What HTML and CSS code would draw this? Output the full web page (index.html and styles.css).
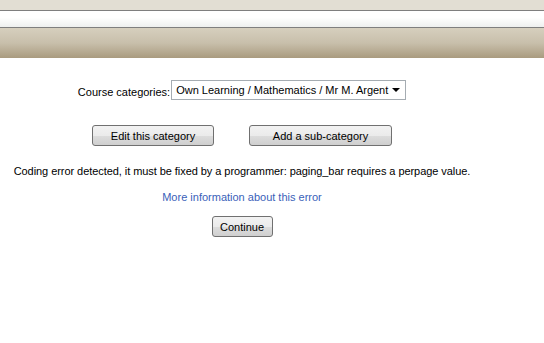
FILE: index.html
```html
<!DOCTYPE html>
<html lang="en">
<head>
  <meta charset="UTF-8" />
  <title>Course categories</title>
  <link rel="stylesheet" href="styles.css">
</head>
<body>
  <div class="header">
    <div class="top-band"></div>
    <div class="white-band"></div>
    <div class="tan-band"></div>
  </div>

  <div class="page">
    <form class="cat-form">
      <label for="category">Course categories:</label>
      <div class="select-box" id="category">
        <span>Own Learning / Mathematics / Mr M. Argent</span>
        <svg class="arrow" width="8" height="4" viewBox="0 0 8 4"><path d="M0 0h8L4 4z" fill="#000"/></svg>
      </div>
    </form>

    <div class="cat-buttons">
      <button type="button" class="btn btn-edit">Edit this category</button>
      <button type="button" class="btn btn-add">Add a sub-category</button>
    </div>

    <p class="error-msg">Coding error detected, it must be fixed by a programmer: paging_bar requires a perpage value.</p>
    <p class="more-info"><a href="#">More information about this error</a></p>
    <div class="continue">
      <button type="button" class="btn btn-continue">Continue</button>
    </div>
  </div>
</body>
</html>
```

FILE: styles.css
```css
body {
  margin: 0;
  font-family: "Liberation Sans", Arial, sans-serif;
  font-size: 11px;
  color: #000;
  background: #fff;
}
.top-band {
  height: 10px;
  background: #e2ded3;
  border-bottom: 1px solid #7f7f7f;
}
.white-band {
  height: 16px;
  background: linear-gradient(#fff, #fff 40%, #eef0ef);
  border-bottom: 1px solid #7f7f7f;
}
.tan-band {
  height: 30px;
  background: linear-gradient(#d6cfbe, #c8bfab 50%, #a99b7f);
}
.page {
  width: 484px;
}
.cat-form {
  display: flex;
  justify-content: center;
  align-items: center;
  gap: 1px;
  margin-top: 22px;
}
.cat-form label {
  padding-top: 3px;
}
.select-box {
  display: flex;
  align-items: center;
  justify-content: space-between;
  width: 224px;
  height: 18px;
  padding: 0 5px 0 4px;
  border: 1px solid #a5acb2;
  background: #fff;
  color: #000;
  white-space: nowrap;
}
.select-box .arrow {
  flex-shrink: 0;
}
.cat-buttons {
  display: flex;
  justify-content: center;
  gap: 35px;
  margin-top: 25px;
}
.btn {
  height: 21px;
  padding: 0;
  font-family: "Liberation Sans", Arial, sans-serif;
  font-size: 11px;
  color: #000;
  border: 1px solid #707070;
  border-radius: 3px;
  background: linear-gradient(#f2f2f2, #ebebeb 50%, #dddddd 51%, #cfcfcf);
}
.btn-edit { width: 122px; }
.btn-add { width: 143px; }
.btn-continue { width: 61px; }
.error-msg {
  margin: 19px 0 0;
  text-align: center;
  letter-spacing: -0.06px;
}
.more-info {
  margin: 14px 0 0;
  text-align: center;
}
.more-info a {
  color: #3a5fb9;
  text-decoration: none;
}
.continue {
  text-align: center;
  margin-top: 13px;
}
```
